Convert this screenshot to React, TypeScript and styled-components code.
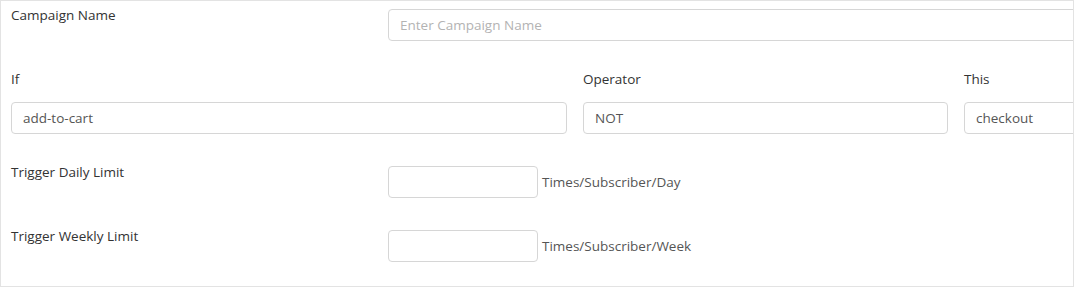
import styled, { createGlobalStyle } from 'styled-components';

const GlobalStyle = createGlobalStyle`
  html, body {
    margin: 0;
    padding: 0;
    background: #ffffff;
    overflow: hidden;
  }
  body {
    font-family: 'Open Sans', 'Noto Sans', sans-serif;
    font-size: 13.5px;
    color: #333333;
  }
  * {
    box-sizing: border-box;
  }
`;

const Panel = styled.div`
  width: 1074px;
  height: 287px;
  border: 1px solid #e3e3e3;
  padding: 3px 0 24px 10px;
  display: flex;
  flex-direction: column;
  gap: 27px;
  overflow: hidden;
`;

const InlineRow = styled.div`
  display: grid;
  grid-template-columns: 377px max-content;
  align-items: start;
`;

const StackRow = styled.div`
  display: grid;
  grid-template-columns: 556px 365px 175px;
  column-gap: 16px;
`;

const Label = styled.label`
  display: block;
  line-height: 21px;
  padding-top: 1px;
  margin-bottom: -1px;
  color: #333333;
  white-space: nowrap;
`;

const Field = styled.div`
  display: flex;
  flex-direction: column;
  gap: 13px;
`;

const Control = styled.div`
  display: flex;
  align-items: center;
  margin-top: 5px;
`;

const Input = styled.input<{ $width?: number }>`
  width: ${({ $width }) => ($width ? `${$width}px` : '100%')};
  height: 32px;
  padding: 0 11px;
  border: 1px solid #d6d6d6;
  border-radius: 4px;
  font-family: inherit;
  font-size: 13.5px;
  color: #555555;
  background: #ffffff;
  outline: none;

  &::placeholder {
    color: #b3b3b3;
  }
`;

const Unit = styled.span`
  margin-left: 4px;
  color: #555555;
  white-space: nowrap;
`;

const App = () => {
  return (
    <>
      <GlobalStyle />
      <Panel>
        <InlineRow>
          <Label>Campaign Name</Label>
          <Control>
            <Input $width={746} placeholder="Enter Campaign Name" />
          </Control>
        </InlineRow>

        <StackRow>
          <Field>
            <Label>If</Label>
            <Input defaultValue="add-to-cart" />
          </Field>
          <Field>
            <Label>Operator</Label>
            <Input defaultValue="NOT" />
          </Field>
          <Field>
            <Label>This</Label>
            <Input defaultValue="checkout" />
          </Field>
        </StackRow>

        <InlineRow>
          <Label>Trigger Daily Limit</Label>
          <Control>
            <Input $width={150} />
            <Unit>Times/Subscriber/Day</Unit>
          </Control>
        </InlineRow>

        <InlineRow>
          <Label>Trigger Weekly Limit</Label>
          <Control>
            <Input $width={150} />
            <Unit>Times/Subscriber/Week</Unit>
          </Control>
        </InlineRow>
      </Panel>
    </>
  );
};

export default App;
